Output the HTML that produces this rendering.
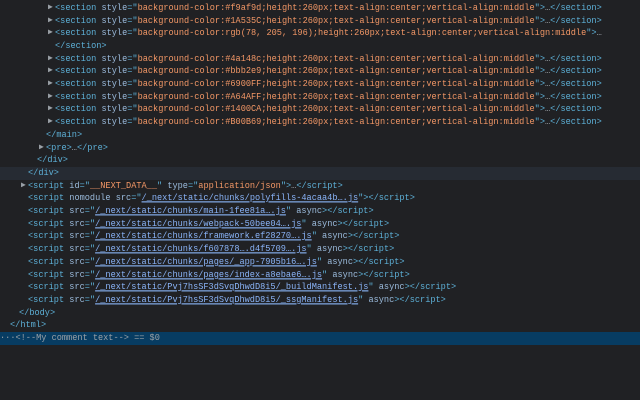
<!DOCTYPE html>
<html><head><meta charset="utf-8"><style>
html,body{margin:0;padding:0;background:#202124;width:640px;height:400px;overflow:hidden}
.r{position:absolute;left:0;width:640px;height:12.7px;line-height:12.7px;font-family:"Liberation Mono",monospace;font-size:8.6px;white-space:pre;overflow:hidden;color:#9aa0a6}
.r>span:first-child{display:inline-block;transform:scaleY(1.12)}
.t{color:#5db0d7}.a{color:#9bbbdc}.v{color:#f29766}.g{color:#9aa0a6}
.l{color:#8ab4f8;text-decoration:underline}
.ar{position:absolute;font-size:8px;color:#9aa0a6}
.hov{background:#262b33}.sel{background:#073c62}
</style></head><body>
<div id="c"></div>
<script>
const S=(c)=>`<span class="t">&lt;section</span> <span class="a">style</span><span class="t">="</span><span class="v">background-color:${c};height:260px;text-align:center;vertical-align:middle</span><span class="t">"&gt;</span>…<span class="t">&lt;/section&gt;</span>`;
const sc=(p,tail)=>`<span class="t">&lt;script</span> <span class="a">src</span><span class="t">="</span><span class="l">${p}</span><span class="t">"</span> <span class="a">async</span><span class="t">&gt;&lt;/script&gt;</span>`;
const rows=[
[55,1,S('#f9af9d')],[55,1,S('#1A535C')],
[55,1,`<span class="t">&lt;section</span> <span class="a">style</span><span class="t">="</span><span class="v">background-color:rgb(78, 205, 196);height:260px;text-align:center;vertical-align:middle</span><span class="t">"&gt;</span>…`],
[55,0,`<span class="t">&lt;/section&gt;</span>`],
[55,1,S('#4a148c')],[55,1,S('#bbb2e9')],[55,1,S('#6900FF')],[55,1,S('#A64AFF')],[55,1,S('#1400CA')],[55,1,S('#B00B69')],
[46,0,`<span class="t">&lt;/main&gt;</span>`],
[46,1,`<span class="t">&lt;pre&gt;</span>…<span class="t">&lt;/pre&gt;</span>`],
[37,0,`<span class="t">&lt;/div&gt;</span>`],
[28,0,`<span class="t">&lt;/div&gt;</span>`,'hov'],
[28,1,`<span class="t">&lt;script</span> <span class="a">id</span><span class="t">="</span><span class="v">__NEXT_DATA__</span><span class="t">"</span> <span class="a">type</span><span class="t">="</span><span class="v">application/json</span><span class="t">"&gt;</span>…<span class="t">&lt;/script&gt;</span>`],
[28,0,`<span class="t">&lt;script</span> <span class="a">nomodule</span> <span class="a">src</span><span class="t">="</span><span class="l">/_next/static/chunks/polyfills-4acaa4b….js</span><span class="t">"&gt;&lt;/script&gt;</span>`],
[28,0,sc('/_next/static/chunks/main-1fee81a….js')],
[28,0,sc('/_next/static/chunks/webpack-50bee04….js')],
[28,0,sc('/_next/static/chunks/framework.ef28270….js')],
[28,0,sc('/_next/static/chunks/f607878….d4f5709….js')],
[28,0,sc('/_next/static/chunks/pages/_app-7905b16….js')],
[28,0,sc('/_next/static/chunks/pages/index-a8ebae6….js')],
[28,0,sc('/_next/static/Pvj7hsSF3dSvqDhwdD8i5/_buildManifest.js')],
[28,0,sc('/_next/static/Pvj7hsSF3dSvqDhwdD8i5/_ssgManifest.js')],
[19,0,`<span class="t">&lt;/body&gt;</span>`],
[10,0,`<span class="t">&lt;/html&gt;</span>`],
[0,0,`<span class="g">···&lt;!--My comment text--&gt; == $0</span>`,'sel']
];
let h='';
rows.forEach((r,i)=>{
 const top=(1.8+12.7*i).toFixed(2);
 h+=`<div class="r ${r[3]||''}" style="top:${top}px"><span style="position:absolute;left:${r[0]}px">${r[2]}</span>${r[1]?`<span class="ar" style="left:${r[0]-7}px">▶</span>`:''}</div>`;
});
document.getElementById('c').innerHTML=h;
</script>
</body></html>
